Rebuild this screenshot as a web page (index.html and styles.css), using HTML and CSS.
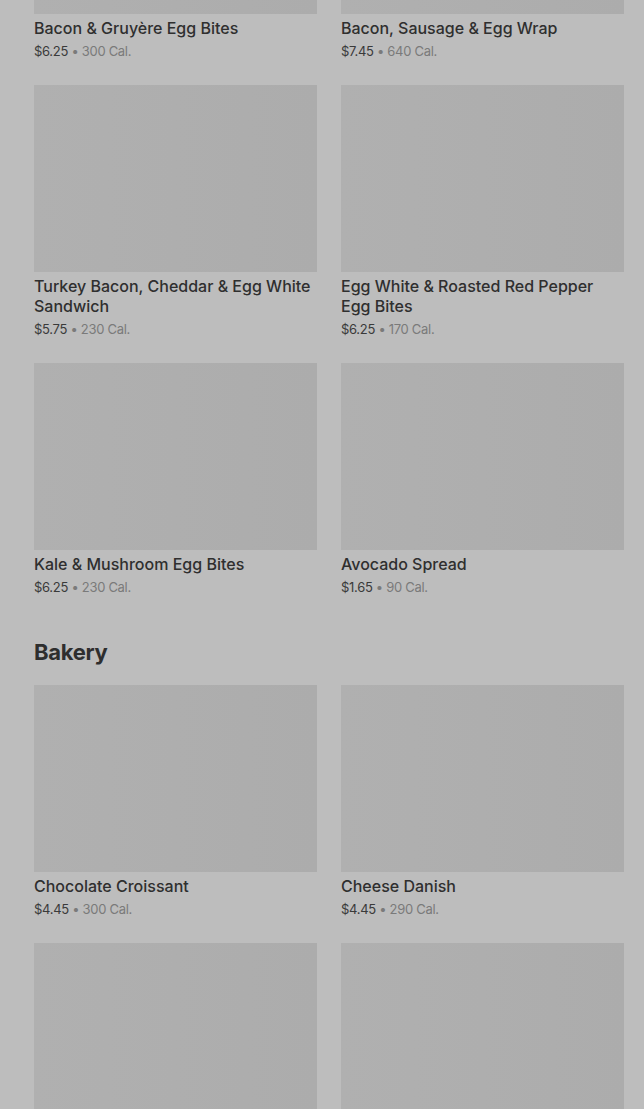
FILE: index.html
```html
<!DOCTYPE html>
<html lang="en">
<head>
    <meta charset="UTF-8">
    <meta name="viewport" content="width=device-width, initial-scale=1.0">
    <title>Menu</title>
    <link rel="stylesheet" href="styles.css">
</head>
<body>
    <div class="menu">
        <!-- Breakfast (scrolled past its heading) -->
        <section class="section">
            <div class="grid">
                <div class="item">
                    <div class="thumb"></div>
                    <div class="name">Bacon &amp; Gruyère Egg Bites</div>
                    <div class="meta"><span class="price">$6.25</span> • 300 Cal.</div>
                </div>
                <div class="item">
                    <div class="thumb"></div>
                    <div class="name">Bacon, Sausage &amp; Egg Wrap</div>
                    <div class="meta"><span class="price">$7.45</span> • 640 Cal.</div>
                </div>
                <div class="item">
                    <div class="thumb"></div>
                    <div class="name">Turkey Bacon, Cheddar &amp; Egg White Sandwich</div>
                    <div class="meta"><span class="price">$5.75</span> • 230 Cal.</div>
                </div>
                <div class="item">
                    <div class="thumb"></div>
                    <div class="name">Egg White &amp; Roasted Red Pepper Egg Bites</div>
                    <div class="meta"><span class="price">$6.25</span> • 170 Cal.</div>
                </div>
                <div class="item">
                    <div class="thumb"></div>
                    <div class="name">Kale &amp; Mushroom Egg Bites</div>
                    <div class="meta"><span class="price">$6.25</span> • 230 Cal.</div>
                </div>
                <div class="item">
                    <div class="thumb"></div>
                    <div class="name">Avocado Spread</div>
                    <div class="meta"><span class="price">$1.65</span> • 90 Cal.</div>
                </div>
            </div>
        </section>

        <section class="section">
            <h2 class="section-title">Bakery</h2>
            <div class="grid">
                <div class="item">
                    <div class="thumb"></div>
                    <div class="name">Chocolate Croissant</div>
                    <div class="meta"><span class="price">$4.45</span> • 300 Cal.</div>
                </div>
                <div class="item">
                    <div class="thumb"></div>
                    <div class="name">Cheese Danish</div>
                    <div class="meta"><span class="price">$4.45</span> • 290 Cal.</div>
                </div>
                <!-- next row, still loading below the fold -->
                <div class="item">
                    <div class="thumb"></div>
                </div>
                <div class="item">
                    <div class="thumb"></div>
                </div>
            </div>
        </section>
    </div>
</body>
</html>
```

FILE: styles.css
```css
html, body {
    height: 100%;
}
body {
    margin: 0;
    font-family: 'Inter', 'Noto Sans', sans-serif;
    background-color: #bdbdbd;
    color: #2f2f2f;
    overflow: hidden; /* page is shown scrolled down */
}
.menu {
    padding: 0 20px 0 34px;
    margin-top: -173px; /* first row image mostly scrolled off */
}
.section {
    margin-bottom: 40px;
}
.section-title {
    margin: 0 0 19px;
    font-size: 22px;
    line-height: 28px;
    font-weight: 700;
    letter-spacing: -0.3px;
    color: #2e2e2e;
}
.grid {
    display: grid;
    grid-template-columns: 283px 283px;
    column-gap: 24px;
    row-gap: 23px;
}
.thumb {
    height: 187px;
    background: linear-gradient(90deg, #b0b0b0, #acacac);
}
.name {
    margin-top: 4px;
    font-size: 16px;
    line-height: 20px;
    font-weight: 500;
    color: #2f2f2f;
}
.meta {
    margin-top: 2px;
    font-size: 13px;
    line-height: 22px;
    letter-spacing: -0.3px;
    color: #7a7a7a;
}
.price {
    color: #3a3a3a;
}
```
